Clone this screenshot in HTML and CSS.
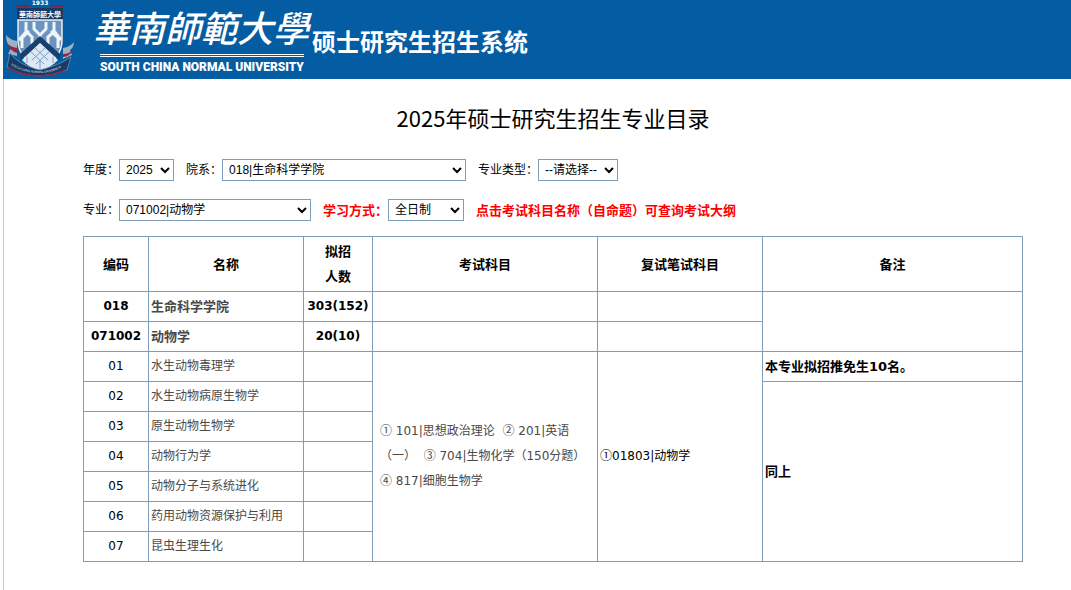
FILE: index.html
```html
<!DOCTYPE html>
<html lang="zh-CN">
<head>
  <meta charset="UTF-8">
  <meta name="viewport" content="width=device-width, initial-scale=1.0">
  <title>硕士研究生招生系统</title>
  <link rel="stylesheet" href="styles.css">
</head>
<body>
  <!-- Header -->
  <header class="header">
    <svg class="emblem" viewBox="0 0 74 78" aria-hidden="true">
      <path d="M13 6h13M48 6h13" stroke="#7d2747" stroke-width="2"/>
      <path d="M14 8h46v34q0 17-23 27Q14 59 14 42z" fill="#173b66"/>
      <text class="emblem-year" x="37" y="5">1933</text>
      <text class="emblem-name" x="37" y="17">華南師範大學</text>
      <path d="M15 20h44v21q0 17-22 29Q15 58 15 41z" fill="#6d94be" stroke="#e8f0f7" stroke-width="1.5"/>
      <path d="M23 22v10l-7 8M23 31l6 6M31 22v7l6 6 6-6v-7M37 33v8M51 22v10l-6 5M51 31l7 9M19 48V38l7-7M55 48V38l-7-7M29 36v8M45 36v8" fill="none" stroke="#eef5fa" stroke-width="3"/>
      <path d="M37 36L17 54v7l20-18 20 18v-7z" fill="#17406f"/>
      <path d="M37 43l18 17q-6 7-18 11-12-4-18-11z" fill="#dce9f4"/>
      <path d="M28 52l13 12M32 48l13 12M46 52L33 64M42 48L29 60M37 60v10M24 57v6M50 57v6" stroke="#7fa1c4" stroke-width="1"/>
      <path d="M3 35q4 5 11 6v15L5 54l3-6q-5-4-5-13zM71 42q-4 5-11 6v11l9-4-2-5q4-3 4-8z" fill="#9fb0c2"/>
      <path d="M4 43q3 4 10 5v5Q7 51 4 43zM70 49q-3 5-10 5v3q7 0 10-8z" fill="#8f2745"/>
      <path d="M7 53q8 12 30 17 20-5 31-13l-4 13q-12 5-27 6Q19 76 4 67z" fill="#173b66" stroke="#8399ae" stroke-width=".7"/>
      <path d="M5 68q14 8 32 8 15-1 25-6" fill="none" stroke="#8f2745" stroke-width="1.5"/>
      <path id="ribbon" d="M8 65q13 8 29 8 16 0 29-11" fill="none"/>
      <text class="emblem-ribbon"><textPath href="#ribbon">SOUTH CHINA NORMAL UNIVERSITY</textPath></text>
    </svg>
    <div class="school">
      <div class="school-name">華南師範大學</div>
      <div class="school-en">SOUTH CHINA NORMAL UNIVERSITY</div>
    </div>
    <div class="system-name">硕士研究生招生系统</div>
  </header>

  <main class="container">
    <h1>2025年硕士研究生招生专业目录</h1>

    <!-- Filters -->
    <form class="filters">
      <div class="filter-row">
        <div class="field">
          <label for="year">年度：</label>
          <select id="year" class="select-year"><option>2025</option></select>
        </div>
        <div class="field">
          <label for="college">院系：</label>
          <select id="college" class="select-college"><option>018|生命科学学院</option></select>
        </div>
        <div class="field">
          <label for="majorType">专业类型：</label>
          <select id="majorType" class="select-type"><option>--请选择--</option></select>
        </div>
      </div>
      <div class="filter-row">
        <div class="field">
          <label for="major">专业：</label>
          <select id="major" class="select-major"><option>071002|动物学</option></select>
        </div>
        <div class="field">
          <label for="studyMode" class="notice">学习方式：</label>
          <select id="studyMode" class="select-mode"><option>全日制</option></select>
        </div>
        <span class="notice">点击考试科目名称（自命题）可查询考试大纲</span>
      </div>
    </form>

    <!-- Catalogue -->
    <table class="catalog">
      <colgroup>
        <col class="col-code">
        <col class="col-name">
        <col class="col-count">
        <col class="col-exam">
        <col class="col-retest">
        <col>
      </colgroup>
      <thead>
        <tr>
          <th>编码</th>
          <th>名称</th>
          <th>拟招<br>人数</th>
          <th>考试科目</th>
          <th>复试笔试科目</th>
          <th>备注</th>
        </tr>
      </thead>
      <tbody>
        <tr class="total">
          <td class="center">018</td>
          <td class="strong"><a href="#">生命科学学院</a></td>
          <td class="center">303(152)</td>
          <td></td>
          <td></td>
          <td rowspan="2"></td>
        </tr>
        <tr class="total">
          <td class="center">071002</td>
          <td class="strong"><a href="#">动物学</a></td>
          <td class="center">20(10)</td>
          <td></td>
          <td></td>
        </tr>
        <tr>
          <td class="center">01</td>
          <td><a href="#">水生动物毒理学</a></td>
          <td></td>
          <td rowspan="7" class="exam">
            <a href="#"><span class="num">①</span> 101|思想政治理论</a>&nbsp;
            <a href="#"><span class="num">②</span> 201|英语（一）</a>&nbsp;
            <a href="#"><span class="num">③</span> 704|生物化学（150分题）</a>
            <a href="#"><span class="num">④</span> 817|细胞生物学</a>
          </td>
          <td rowspan="7"><span class="num">①</span>01803|动物学</td>
          <td class="strong">本专业拟招推免生10名。</td>
        </tr>
        <tr>
          <td class="center">02</td>
          <td><a href="#">水生动物病原生物学</a></td>
          <td></td>
          <td rowspan="6" class="strong">同上</td>
        </tr>
        <tr>
          <td class="center">03</td>
          <td><a href="#">原生动物生物学</a></td>
          <td></td>
        </tr>
        <tr>
          <td class="center">04</td>
          <td><a href="#">动物行为学</a></td>
          <td></td>
        </tr>
        <tr>
          <td class="center">05</td>
          <td><a href="#">动物分子与系统进化</a></td>
          <td></td>
        </tr>
        <tr>
          <td class="center">06</td>
          <td><a href="#">药用动物资源保护与利用</a></td>
          <td></td>
        </tr>
        <tr>
          <td class="center">07</td>
          <td><a href="#">昆虫生理生化</a></td>
          <td></td>
        </tr>
      </tbody>
    </table>
  </main>
</body>
</html>
```

FILE: styles.css
```css
:root {
  --blue: #045ca3;
  --line: #7f9db9;
  --link: #494949;
  --red: #ff0000;
}

* {
  box-sizing: border-box;
}

body {
  margin: 0 0 0 3px;
  background: #fff;
  color: #000;
  font: 12px/25px "DejaVu Sans", "Noto Sans CJK SC", sans-serif;
}

a {
  color: var(--link);
  text-decoration: none;
}

/* Header */
.header {
  display: flex;
  height: 79px;
  background: var(--blue);
  color: #fff;
  white-space: nowrap;
}

.emblem {
  width: 74px;
  height: 78px;
  flex: none;
}

.emblem text {
  fill: #fff;
  text-anchor: middle;
}

.emblem .emblem-year {
  font: bold 6px "DejaVu Sans", sans-serif;
}

.emblem .emblem-name {
  font: bold 7px "Noto Sans CJK TC", sans-serif;
}

.emblem .emblem-ribbon {
  font: 3px "Liberation Serif", serif;
  text-anchor: start;
}

.school {
  margin-left: 16px;
}

.school-name {
  height: 54px;
  font: italic 500 36px/52px "Noto Sans CJK TC", sans-serif;
}

.school-en {
  width: 204px;
  margin-left: 7px;
  border-top: 3px double #fff;
  font: 900 12px/20px Roboto, "Liberation Sans", sans-serif;
}

.system-name {
  padding: 25px 0 0 3px;
  font: bold 24px/32px "Noto Sans CJK SC", sans-serif;
}

/* Page */
.container {
  min-height: calc(100vh - 79px);
  padding: 20px 48px 20px 79px;
  border-left: 1px solid #ccc;
}

h1 {
  margin: 0 0 15px;
  font: 22px/36px "Noto Sans CJK SC", sans-serif;
  text-align: center;
}

/* Filters */
.filters {
  margin-bottom: 6px;
}

.filter-row {
  display: flex;
  align-items: center;
  gap: 12px;
  height: 40px;
  white-space: nowrap;
}

.field {
  display: flex;
  align-items: center;
}

select {
  height: 22px;
  padding: 0 2px;
  border: 1px solid var(--line);
  background: #fff;
  color: #000;
  font: 12px "Liberation Sans", "Noto Sans CJK SC", sans-serif;
}

.select-year { width: 55px; }
.select-college { width: 244px; }
.select-type { width: 80px; }
.select-major { width: 192px; }
.select-mode { width: 76px; }

.notice {
  color: var(--red);
  font-size: 13px;
  font-weight: bold;
}

/* Catalogue */
.catalog {
  width: 100%;
  table-layout: fixed;
  border-collapse: collapse;
}

.col-code { width: 65px; }
.col-name { width: 155px; }
.col-count { width: 69px; }
.col-exam { width: 225px; }
.col-retest { width: 165px; }

.catalog th,
.catalog td {
  height: 30px;
  padding: 2px;
  border: 1px solid var(--line);
}

.catalog th {
  font-size: 13px;
}

.catalog .center {
  text-align: center;
}

.catalog .total {
  font-weight: bold;
}

.catalog .strong {
  font-size: 13px;
  font-weight: bold;
}

.catalog .exam {
  padding: 2px 7px;
}

.num {
  font-family: "Noto Sans CJK SC", sans-serif;
  line-height: 1;
}
```
